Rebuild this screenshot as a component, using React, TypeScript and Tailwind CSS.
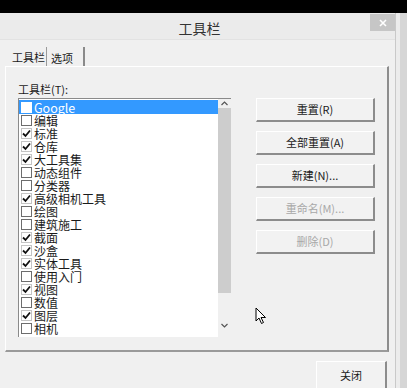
import React from 'react';

const items: { label: string; checked: boolean }[] = [
  { label: 'Google', checked: false },
  { label: '编辑', checked: false },
  { label: '标准', checked: true },
  { label: '仓库', checked: true },
  { label: '大工具集', checked: true },
  { label: '动态组件', checked: false },
  { label: '分类器', checked: false },
  { label: '高级相机工具', checked: true },
  { label: '绘图', checked: false },
  { label: '建筑施工', checked: false },
  { label: '截面', checked: true },
  { label: '沙盒', checked: true },
  { label: '实体工具', checked: true },
  { label: '使用入门', checked: false },
  { label: '视图', checked: true },
  { label: '数值', checked: false },
  { label: '图层', checked: true },
  { label: '相机', checked: false },
];

const buttons: { label: string; disabled?: boolean }[] = [
  { label: '重置(R)' },
  { label: '全部重置(A)' },
  { label: '新建(N)...' },
  { label: '重命名(M)...', disabled: true },
  { label: '删除(D)', disabled: true },
];

const Check = ({ checked, selected }: { checked: boolean; selected?: boolean }) => (
  <span
    className={`w-[11px] h-[11px] shrink-0 flex items-center justify-center border bg-white ${
      selected ? 'border-white' : checked ? 'border-[#c4c4c4]' : 'border-[#6d6d6d]'
    }`}
  >
    {checked && (
      <svg width="9" height="9" viewBox="0 0 9 9">
        <path d="M1 4.5 L3.5 7 L8 1.5" fill="none" stroke="#111" strokeWidth="1.8" />
      </svg>
    )}
  </span>
);

const WinButton = ({ label, disabled }: { label: string; disabled?: boolean }) => (
  <div
    className={`h-[24px] w-[119px] flex items-center justify-center bg-[#f2f2f2] border-t border-l border-t-white border-l-white border-r-2 border-b-2 border-r-[#8c8c8c] border-b-[#8c8c8c] text-[11px] leading-[13px] whitespace-nowrap ${
      disabled ? 'text-[#a8a8a8]' : 'text-[#1a1a1a]'
    }`}
  >
    {label}
  </div>
);

export default function App() {
  return (
    <div
      className="w-[407px] h-[388px] overflow-hidden bg-black flex flex-col"
      style={{ fontFamily: '"Noto Sans CJK SC", "Noto Sans", sans-serif' }}
    >
      <div className="h-[13px] shrink-0" />
      <div className="flex flex-1">
        <div className="w-[396px] bg-[#f0f0f0] flex flex-col border-r border-[#c9c9c9]">
          {/* title bar */}
          <div className="h-[27px] shrink-0 relative flex items-center justify-center bg-[#ebebeb] border-b border-[#e2e2e2]">
            <span className="text-[14px] text-[#333] leading-[16px] pl-[4px] pt-[3px]">工具栏</span>
            <div className="absolute right-0 top-[1px] w-[25px] h-[17px] bg-[#c6c6c6] flex items-center justify-center">
              <svg width="8" height="8" viewBox="0 0 8 8">
                <path d="M1 1 L7 7 M7 1 L1 7" stroke="#fff" strokeWidth="1.6" />
              </svg>
            </div>
          </div>

          {/* tabs */}
          <div className="pl-[6px] pt-[7px] flex h-[26px] shrink-0 text-[11px] leading-[13px] text-[#1a1a1a] whitespace-nowrap">
            <div className="w-[41px] pt-[4px] pl-[6px] border-r border-[#9a9a9a]">工具栏</div>
            <div className="w-[38px] pt-[5px] pl-[4px] border-r-2 border-[#8a8a8a]">选项</div>
          </div>

          {/* panel */}
          <div className="ml-[5px] w-[384px] h-[286px] shrink-0 border-t border-t-white border-l border-l-white border-r-2 border-r-[#8d8d8d] border-b-2 border-b-[#9a9a9a] flex flex-col pl-[12px] pt-[16px]">
            <div className="text-[11px] text-[#1a1a1a] leading-[13px] h-[15px]">工具栏(T):</div>
            <div className="flex">
              <div className="w-[213px] h-[239px] border-t border-l border-t-[#8a8a8a] border-l-[#8a8a8a] bg-white flex overflow-hidden">
                <div className="flex-1 flex flex-col pt-px">
                  {items.map((it, i) => (
                    <div
                      key={it.label}
                      className={`flex items-center gap-[2px] pl-[2px] ${
                        i === 0 ? 'h-[14px] bg-[#3399ff] text-white' : 'h-[13px] text-[#1a1a1a]'
                      }`}
                    >
                      <Check checked={it.checked} selected={i === 0} />
                      <span
                        className={`block h-[13px] leading-[13px] ${
                          i === 0 ? 'text-[12.5px]' : 'text-[12px]'
                        }`}
                      >
                        {it.label}
                      </span>
                    </div>
                  ))}
                </div>
                <div className="w-[13px] bg-[#f0f0f0] flex flex-col items-center">
                  <div className="h-[9px] flex items-center justify-center">
                    <svg width="7" height="5" viewBox="0 0 7 5">
                      <path d="M0.5 4 L3.5 1 L6.5 4" fill="none" stroke="#555" strokeWidth="1.2" />
                    </svg>
                  </div>
                  <div className="w-[13px] h-[185px] bg-[#cdcdcd]" />
                  <div className="flex-1" />
                  <div className="h-[14px] flex items-start justify-center">
                    <svg width="7" height="5" viewBox="0 0 7 5">
                      <path d="M0.5 1 L3.5 4 L6.5 1" fill="none" stroke="#555" strokeWidth="1.2" />
                    </svg>
                  </div>
                </div>
              </div>
              <div className="ml-[25px] flex flex-col gap-[9px]">
                {buttons.map((b) => (
                  <WinButton key={b.label} label={b.label} disabled={b.disabled} />
                ))}
                <div className="relative h-[52px]">
                  <svg
                    className="absolute left-[-1px] top-[44px]"
                    width="12"
                    height="18"
                    viewBox="0 0 12 18"
                  >
                    <path
                      d="M1 1 L1 14 L4 11 L6.5 16.5 L8.5 15.5 L6 10.5 L10.5 10.5 Z"
                      fill="#fff"
                      stroke="#000"
                      strokeWidth="1"
                      strokeLinejoin="round"
                    />
                  </svg>
                </div>
              </div>
            </div>
          </div>

          {/* footer */}
          <div className="flex justify-end pr-[8px] pt-[9px]">
            <div className="h-[27px] w-[71px] flex items-center justify-center bg-[#f2f2f2] border-t border-l border-t-white border-l-white border-r-2 border-r-[#8c8c8c] text-[11px] leading-[13px] text-[#1a1a1a]">
              关闭
            </div>
          </div>
        </div>
        <div className="flex-1 bg-[#d6d6d6] border-l-4 border-[#ececec]" />
      </div>
    </div>
  );
}
